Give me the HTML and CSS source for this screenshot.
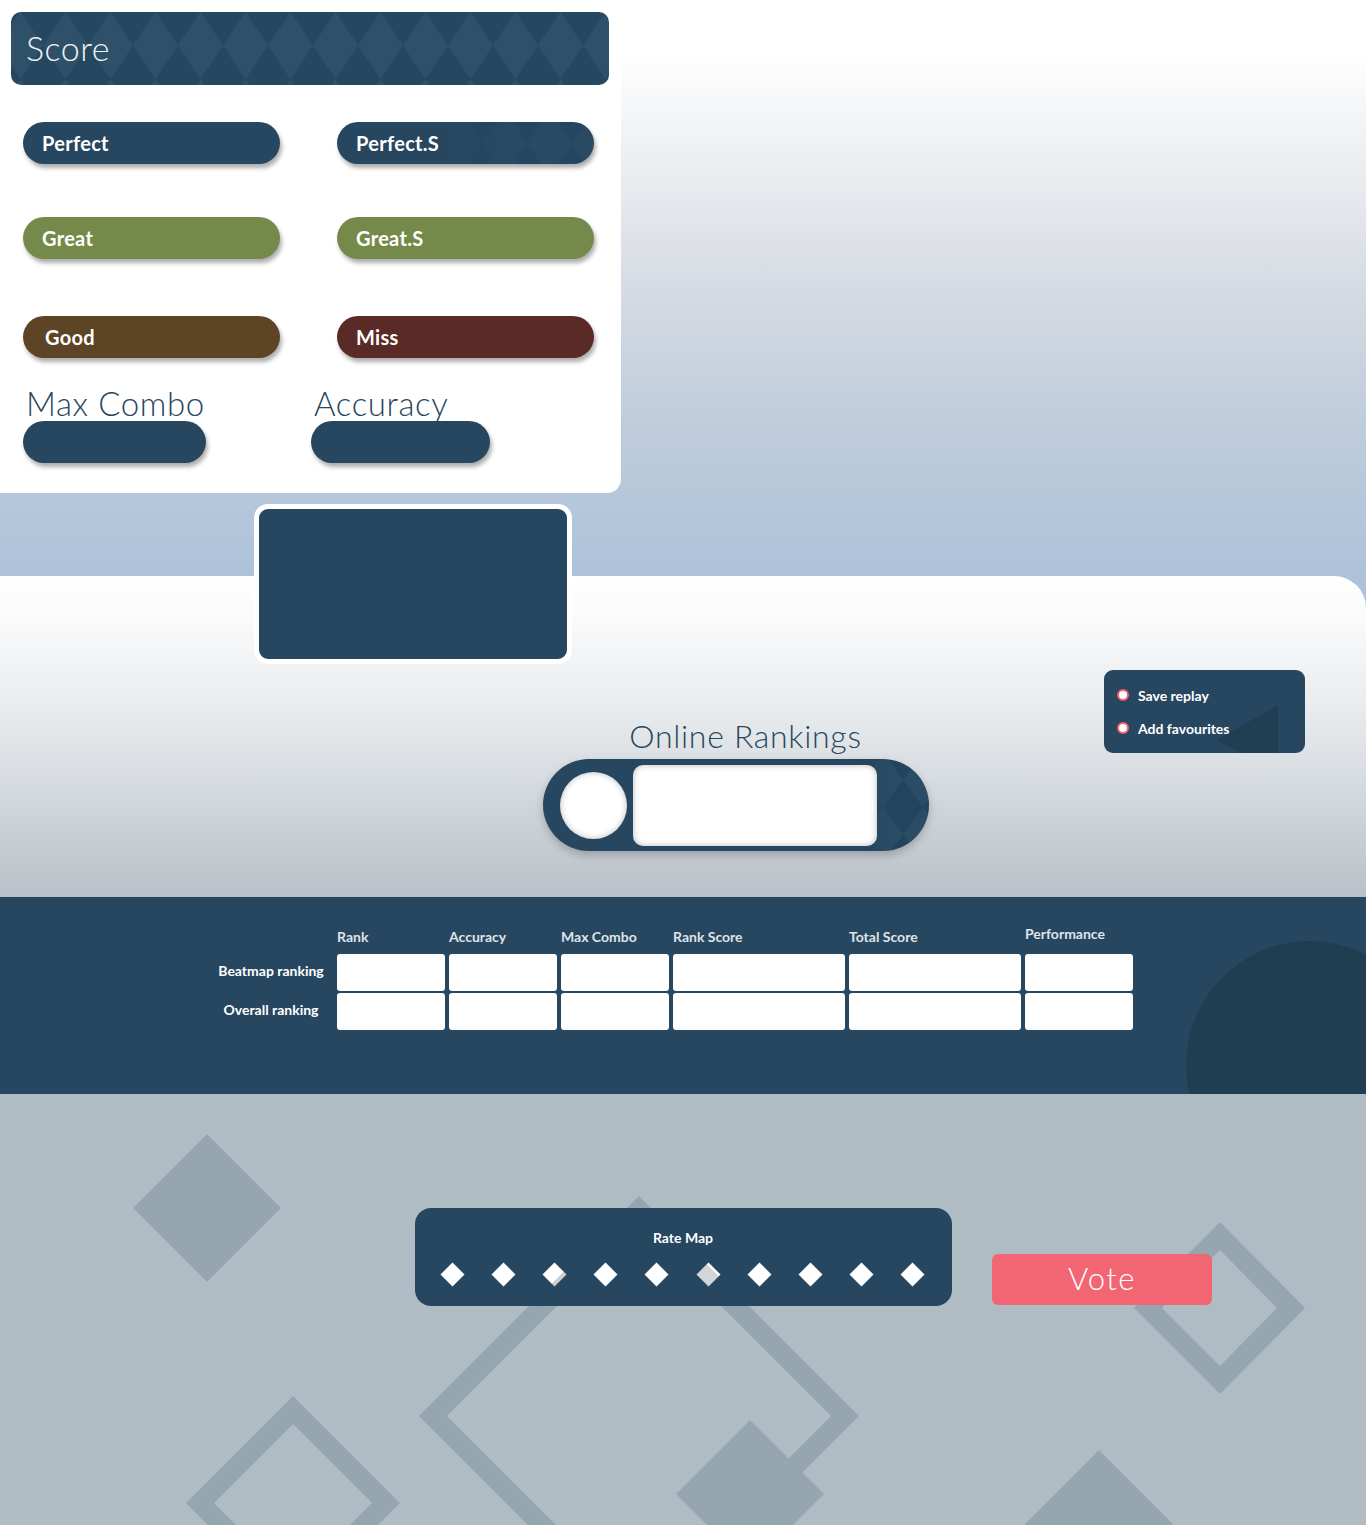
FILE: index.html
```html
<!DOCTYPE html>
<html lang="en">
<head>
<meta charset="utf-8">
<title>Result</title>
<link rel="stylesheet" href="styles.css">
</head>
<body>
<div class="page">
  <section class="top">
    <div class="score-card">
      <div class="score-head">Score</div>
      <div class="judges">
        <div class="pill c-perfect">Perfect</div>
        <div class="pill c-perfect patterned">Perfect.S</div>
        <div class="pill c-great">Great</div>
        <div class="pill c-great">Great.S</div>
        <div class="pill c-good low">Good</div>
        <div class="pill c-miss low">Miss</div>
      </div>
      <div class="stats">
        <div class="stat">
          <div class="stat-label">Max Combo</div>
          <div class="pill c-perfect stat-combo"></div>
        </div>
        <div class="stat">
          <div class="stat-label">Accuracy</div>
          <div class="pill c-perfect stat-acc"></div>
        </div>
      </div>
    </div>
    <div class="preview"></div>
  </section>

  <section class="online">
    <div class="online-grid">
      <div class="rank-group">
        <div class="online-title">Online Rankings</div>
        <div class="rank-pill">
          <div class="avatar"></div>
          <div class="rank-field"></div>
        </div>
      </div>
      <div class="actions">
        <div class="action"><span class="bullet"></span>Save replay</div>
        <div class="action"><span class="bullet"></span>Add favourites</div>
        <svg class="action-deco" width="61" height="48" viewBox="0 0 61 48"><polygon points="0,35 61,0 61,48 24,48" fill="#213e53"/></svg>
      </div>
    </div>
  </section>

  <section class="ranking">
    <div class="ranking-circle"></div>
    <div class="rank-table">
      <div></div>
      <div class="th">Rank</div>
      <div class="th">Accuracy</div>
      <div class="th">Max Combo</div>
      <div class="th">Rank Score</div>
      <div class="th">Total Score</div>
      <div class="th th-up">Performance</div>

      <div class="row-label">Beatmap ranking</div>
      <div class="cell"></div><div class="cell"></div><div class="cell"></div>
      <div class="cell"></div><div class="cell"></div><div class="cell"></div>

      <div class="row-label">Overall ranking</div>
      <div class="cell"></div><div class="cell"></div><div class="cell"></div>
      <div class="cell"></div><div class="cell"></div><div class="cell"></div>
    </div>
  </section>

  <section class="rate">
    <svg class="rate-deco" width="1366" height="431" viewBox="0 0 1366 431">
      <g fill="#95a6b1">
        <polygon points="207,40 281,114 207,188 133,114"/>
        <path fill-rule="evenodd" d="M639,102 L859,322 L639,542 L419,322 Z M639,130 L831,322 L639,514 L447,322 Z"/>
        <path fill-rule="evenodd" d="M293,302 L400,409 L293,516 L186,409 Z M293,330 L372,409 L293,488 L214,409 Z"/>
        <path fill-rule="evenodd" d="M1220,128 L1305,214 L1220,300 L1134,214 Z M1220,156 L1277,214 L1220,272 L1162,214 Z"/>
        <polygon points="750,326 824,400 750,474 676,400"/>
        <polygon points="1099,356 1173,430 1099,504 1025,430"/>
      </g>
    </svg>
    <div class="rate-content">
      <div class="rate-box">
        <div class="rate-title">Rate Map</div>
        <div class="stars">
          <span class="star"></span>
          <span class="star"></span>
          <span class="star star-edge"></span>
          <span class="star"></span>
          <span class="star"></span>
          <span class="star star-dim"></span>
          <span class="star"></span>
          <span class="star"></span>
          <span class="star"></span>
          <span class="star"></span>
        </div>
      </div>
      <div class="vote">Vote</div>
    </div>
  </section>
</div>
</body>
</html>
```

FILE: styles.css
```css
* { box-sizing: border-box; }

html, body {
  margin: 0;
  padding: 0;
}

body {
  font-family: "Lato", "Noto Sans", "DejaVu Sans", sans-serif;
  background: #b0bcc4;
  color: #fff;
}

.page {
  width: 1366px;
  background: #adc2da;
}

/* ---------- top section ---------- */
.top {
  position: relative;
  height: 576px;
  background: linear-gradient(180deg, #ffffff 0%, #ffffff 9%, #eceef1 28%, #d6dbe3 50%, #c0cddc 72%, #adc2da 100%);
}

.score-card {
  width: 621px;
  height: 493px;
  background: #fff;
  border-bottom-right-radius: 14px;
  padding: 12px 12px 0 11px;
}

.score-head {
  height: 73px;
  border-radius: 10px;
  display: flex;
  align-items: center;
  padding-left: 15px;
  padding-bottom: 3px;
  font-size: 34px;
  font-weight: 300;
  color: #eef2f5;
  letter-spacing: 0.5px;
  background-color: #274760;
  background-image: url("data:image/svg+xml,%3Csvg xmlns='http://www.w3.org/2000/svg' width='45' height='67'%3E%3Crect width='45' height='67' fill='%23264760'/%3E%3Cpolygon points='22.5,0 45,33.5 22.5,67 0,33.5' fill='%232e5069'/%3E%3C/svg%3E");
  background-position: -13px 0;
}

.judges {
  display: grid;
  grid-template-columns: 257px 257px;
  grid-auto-rows: 42px;
  column-gap: 57px;
  row-gap: 53px;
  margin-top: 37px;
  padding-left: 12px;
}

.pill {
  height: 42px;
  border-radius: 21px;
  display: flex;
  align-items: center;
  padding-left: 19px;
  font-size: 20px;
  font-weight: 700;
  letter-spacing: 0.3px;
  color: #fff;
  box-shadow: 2px 4px 4px rgba(0, 0, 0, 0.32);
}

.pill.low { margin-top: 4px; }
.c-good { padding-left: 22px; }

.c-perfect { background-color: #274760; }
.c-great { background-color: #758a4a; }
.c-good { background-color: #5c4425; }
.c-miss { background-color: #5a2a26; }

.patterned {
  background-image:
    linear-gradient(90deg, #274760 40%, rgba(39, 71, 96, 0) 75%),
    url("data:image/svg+xml,%3Csvg xmlns='http://www.w3.org/2000/svg' width='45' height='67'%3E%3Crect width='45' height='67' fill='%23254560'/%3E%3Cpolygon points='22.5,0 45,33.5 22.5,67 0,33.5' fill='%232a4a63'/%3E%3C/svg%3E");
  background-position: 0 0, 10px -12px;
}

.stats {
  display: grid;
  grid-template-columns: 288px auto;
  margin-top: 31px;
  padding-left: 12px;
}

.stat-label {
  height: 36px;
  line-height: 36px;
  font-size: 33px;
  font-weight: 300;
  color: #274760;
  padding-left: 3px;
  letter-spacing: 0.6px;
  white-space: nowrap;
}

.stat-combo { width: 183px; }
.stat-acc { width: 179px; }

.preview {
  position: absolute;
  left: 254px;
  top: 504px;
  width: 318px;
  height: 160px;
  border: 5px solid #fff;
  border-radius: 14px;
  background: #274760;
  z-index: 5;
}

/* ---------- online section ---------- */
.online {
  height: 321px;
  border-top-right-radius: 32px;
  background: linear-gradient(180deg, #ffffff 0%, #fbfbfc 12%, #e6e9ec 45%, #cdd3d8 75%, #b9c1c8 100%);
}

.online-grid {
  display: grid;
  grid-template-columns: 543px 386px 175px 201px;
}

.rank-group {
  grid-column: 2;
  padding-top: 142px;
}

.online-title {
  height: 36px;
  line-height: 36px;
  font-size: 32px;
  font-weight: 300;
  color: #274760;
  text-align: center;
  padding-left: 19px;
  letter-spacing: 0.7px;
  white-space: nowrap;
  margin-bottom: 5px;
}

.rank-pill {
  height: 92px;
  border-radius: 46px;
  display: flex;
  align-items: center;
  padding-left: 17px;
  gap: 6px;
  background-color: #274760;
  background-image:
    linear-gradient(90deg, #274760 0%, #274760 80%, rgba(39, 71, 96, 0) 92%),
    url("data:image/svg+xml,%3Csvg xmlns='http://www.w3.org/2000/svg' width='40' height='54'%3E%3Crect width='40' height='54' fill='%2323445c'/%3E%3Cpolygon points='20,0 40,27 20,54 0,27' fill='%232b4c65'/%3E%3C/svg%3E");
  background-position: 0 0, 0 -6px;
  box-shadow: 0 4px 8px rgba(0, 0, 0, 0.22);
}

.avatar {
  width: 67px;
  height: 67px;
  border-radius: 50%;
  background: #fff;
  box-shadow: inset 0 0 6px rgba(0, 0, 0, 0.28);
  flex: none;
}

.rank-field {
  width: 244px;
  height: 81px;
  border-radius: 10px;
  background: #fff;
  box-shadow: inset 0 0 6px rgba(0, 0, 0, 0.28);
  flex: none;
}

.actions {
  grid-column: 4;
  margin-top: 94px;
  height: 83px;
  border-radius: 9px;
  background: #274760;
  padding: 16px 0 0 13px;
  position: relative;
  overflow: hidden;
}

.action {
  position: relative;
  z-index: 1;
  display: flex;
  align-items: center;
  gap: 9px;
  height: 18px;
  font-size: 14px;
  font-weight: 700;
  color: #fff;
  margin-bottom: 15px;
}

.bullet {
  width: 12px;
  height: 12px;
  border-radius: 50%;
  background: #fff;
  border: 2.5px solid #f0606e;
  flex: none;
}

.action-deco {
  position: absolute;
  left: 113px;
  top: 35px;
}

/* ---------- ranking table ---------- */
.ranking {
  position: relative;
  height: 197px;
  background: #274760;
  overflow: hidden;
  padding-top: 32px;
}

.ranking-circle {
  position: absolute;
  left: 1186px;
  top: 44px;
  width: 248px;
  height: 248px;
  border-radius: 50%;
  background: #213d52;
}

.rank-table {
  position: relative;
  display: grid;
  grid-template-columns: 124px 108px 108px 108px 172px 172px 108px;
  grid-template-rows: 23px 37px 37px;
  column-gap: 4px;
  row-gap: 2px;
  margin-left: 209px;
  width: max-content;
}

.th {
  font-size: 14px;
  font-weight: 700;
  line-height: 16px;
  color: #dfe4e8;
  white-space: nowrap;
}

.th-up { margin-top: -3px; }

.row-label {
  align-self: center;
  text-align: center;
  font-size: 14px;
  font-weight: 700;
  color: #fff;
  white-space: nowrap;
  margin-bottom: 4px;
}

.cell {
  background: #fff;
  border-radius: 3px;
}

/* ---------- rate section ---------- */
.rate {
  position: relative;
  height: 431px;
  background: #b0bcc4;
  overflow: hidden;
}

.rate-deco {
  position: absolute;
  left: 0;
  top: 0;
}

.rate-content {
  position: relative;
  display: flex;
  align-items: flex-end;
  gap: 40px;
  padding: 114px 0 0 415px;
}

.rate-box {
  width: 537px;
  height: 98px;
  border-radius: 16px;
  background: #274760;
  padding-top: 22px;
}

.rate-title {
  text-align: center;
  font-size: 14px;
  font-weight: 700;
  line-height: 16px;
  color: #fff;
  padding-right: 1px;
}

.stars {
  display: flex;
  justify-content: space-between;
  margin-top: 16px;
  padding: 0 27px 0 25px;
}

.star {
  width: 24px;
  height: 24px;
  display: flex;
  align-items: center;
  justify-content: center;
}

.star::before {
  content: "";
  width: 17px;
  height: 17px;
  background: #fff;
  transform: rotate(45deg);
}

.star-edge::before {
  background: linear-gradient(90deg, #fff 0%, #fff 78%, #c9d0d5 78%);
}

.star-dim::before {
  background: linear-gradient(180deg, #fff 0%, #fff 16%, #d0d6da 16%);
}

.vote {
  width: 220px;
  height: 51px;
  border-radius: 6px;
  background: #f26674;
  margin-bottom: 1px;
  padding-bottom: 3px;
  display: flex;
  align-items: center;
  justify-content: center;
  font-size: 31px;
  font-weight: 300;
  letter-spacing: 1.5px;
  color: #fff;
}
```
